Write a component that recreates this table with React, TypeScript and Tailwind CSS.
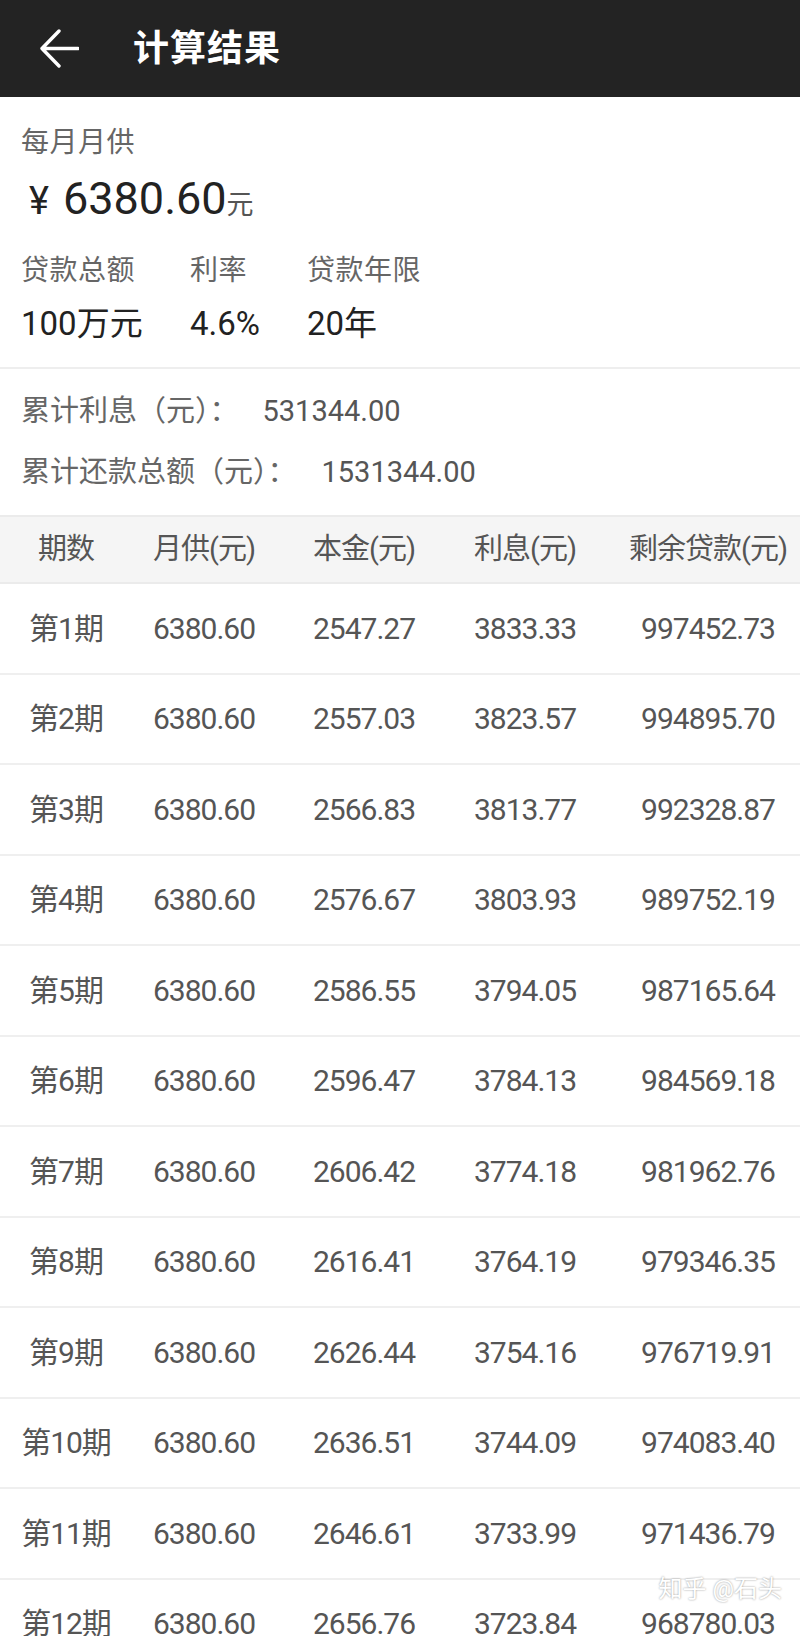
import React from "react"

type Row = {
  no: number
  pay: string
  principal: string
  interest: string
  left: string
}

const rows: Row[] = [
  { no: 1, pay: "6380.60", principal: "2547.27", interest: "3833.33", left: "997452.73" },
  { no: 2, pay: "6380.60", principal: "2557.03", interest: "3823.57", left: "994895.70" },
  { no: 3, pay: "6380.60", principal: "2566.83", interest: "3813.77", left: "992328.87" },
  { no: 4, pay: "6380.60", principal: "2576.67", interest: "3803.93", left: "989752.19" },
  { no: 5, pay: "6380.60", principal: "2586.55", interest: "3794.05", left: "987165.64" },
  { no: 6, pay: "6380.60", principal: "2596.47", interest: "3784.13", left: "984569.18" },
  { no: 7, pay: "6380.60", principal: "2606.42", interest: "3774.18", left: "981962.76" },
  { no: 8, pay: "6380.60", principal: "2616.41", interest: "3764.19", left: "979346.35" },
  { no: 9, pay: "6380.60", principal: "2626.44", interest: "3754.16", left: "976719.91" },
  { no: 10, pay: "6380.60", principal: "2636.51", interest: "3744.09", left: "974083.40" },
  { no: 11, pay: "6380.60", principal: "2646.61", interest: "3733.99", left: "971436.79" },
  { no: 12, pay: "6380.60", principal: "2656.76", interest: "3723.84", left: "968780.03" },
]

const font = "font-['Roboto','Noto_Sans_CJK_SC',sans-serif]"
const cols = "grid grid-cols-[132px_144px_176px_146px_1fr] items-center text-center"

export default function App() {
  return (
    <div className={`w-[800px] h-[1636px] overflow-hidden bg-white ${font}`}>
      {/* top bar */}
      <div className="h-[97px] bg-[#232323] flex items-center">
        <svg className="ml-[40px] w-[39px] h-[39px]" viewBox="0 0 39 39" fill="none">
          <path d="M2 19.5H38M19 2L2 19.5L19 37" stroke="white" strokeWidth="3.4" strokeLinecap="round" strokeLinejoin="round" />
        </svg>
        <div className="ml-[54px] text-[36px] font-bold text-white tracking-[1px]">计算结果</div>
      </div>

      {/* summary */}
      <div className="px-[21px] pt-[28px] pb-[25px]">
        <div className="text-[28px] leading-[36px] text-[#666] tracking-[0.5px]">每月月供</div>
        <div className="mt-[10px] flex items-baseline text-[#222] pl-[8px]">
          <span className="text-[38px]">¥</span>
          <span className="ml-[14px] text-[45px] leading-[56px]">6380.60</span>
          <span className="text-[27px] text-[#555]">元</span>
        </div>
        <div className="mt-[23px] flex">
          <div className="w-[169px]">
            <div className="text-[28px] leading-[36px] text-[#666] tracking-[0.5px]">贷款总额</div>
            <div className="mt-[17px] text-[33px] leading-[36px] text-[#222]">100万元</div>
          </div>
          <div className="w-[117px]">
            <div className="text-[28px] leading-[36px] text-[#666] tracking-[0.5px]">利率</div>
            <div className="mt-[17px] text-[33px] leading-[36px] text-[#222]">4.6%</div>
          </div>
          <div>
            <div className="text-[28px] leading-[36px] text-[#666] tracking-[0.5px]">贷款年限</div>
            <div className="mt-[17px] text-[33px] leading-[36px] text-[#222]">20年</div>
          </div>
        </div>
      </div>
      <div className="h-[2px] bg-[#eeeeee]" />

      <div className="px-[21px] pt-[25px] pb-[24px] text-[#666] text-[29px]">
        <div className="flex h-[36px] items-center">
          <span>累计利息（元）：</span>
          <span className="ml-[24px] text-[#555]">531344.00</span>
        </div>
        <div className="mt-[25px] flex h-[36px] items-center">
          <span>累计还款总额（元）：</span>
          <span className="ml-[25px] text-[#555]">1531344.00</span>
        </div>
      </div>

      {/* table */}
      <div className={`${cols} h-[69px] bg-[#f5f5f5] border-t-2 border-b-2 border-[#ebebeb] text-[29px] text-[#555] tracking-[-1px]`}>
        <div>期数</div>
        <div>月供(元)</div>
        <div>本金(元)</div>
        <div>利息(元)</div>
        <div className="pl-[18px] whitespace-nowrap">剩余贷款(元)</div>
      </div>
      {rows.map((r) => (
        <div
          key={r.no}
          className={`${cols} h-[90.5px] border-b-2 border-[#efefef] text-[30px] text-[#555] tracking-[-1px]`}
        >
          <div>第{r.no}期</div>
          <div>{r.pay}</div>
          <div>{r.principal}</div>
          <div>{r.interest}</div>
          <div className="pl-[18px] relative">
            {r.no === 12 && (
              <span className="absolute right-[18px] -top-[30px] text-[24px] text-white tracking-normal [text-shadow:0_0_2px_rgba(0,0,0,0.45)]">
                知乎 @石头
              </span>
            )}
            {r.left}
          </div>
        </div>
      ))}
    </div>
  )
}
